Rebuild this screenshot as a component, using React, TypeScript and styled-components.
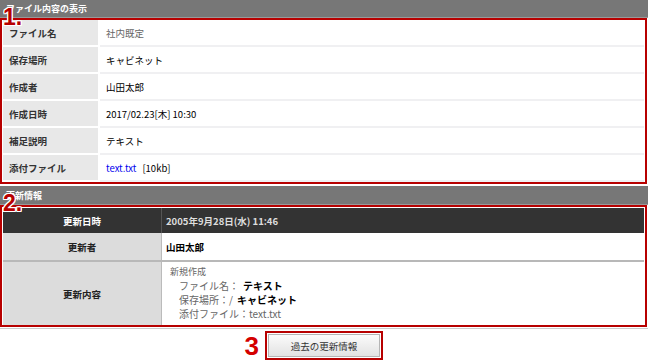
import React from "react";
import styled, { createGlobalStyle } from "styled-components";

const Global = createGlobalStyle`
  html, body { margin: 0; padding: 0; background: #fff; }
  body { font-family: "Noto Sans CJK JP", "Liberation Sans", sans-serif; width: 648px; height: 360px; overflow: hidden; }
`;

const RED = "#b70000";

const Page = styled.div`
  width: 648px;
  display: flex;
  flex-direction: column;
`;

const Section = styled.section`
  position: relative;
  display: flex;
  flex-direction: column;
`;

const SectionHeader = styled.div<{ $h: number }>`
  height: ${(p) => p.$h}px;
  line-height: ${(p) => p.$h}px;
  background: #777;
  color: #fff;
  font-size: 9px;
  font-weight: bold;
  padding-left: 6px;
  border-bottom: 1px solid #999;
  box-sizing: border-box;
`;

const Marker = styled.div<{ $top: number }>`
  position: absolute;
  left: 3px;
  top: ${(p) => p.$top}px;
  font-family: "Liberation Sans", Arial, sans-serif;
  font-weight: bold;
  font-size: 23px;
  line-height: 23px;
  color: ${RED};
  text-shadow: 1px 1px 0 #fff, -1px -1px 0 #fff, 1px -1px 0 #fff, -1px 1px 0 #fff,
    0 1px 0 #fff, 1px 0 0 #fff, 0 -1px 0 #fff, -1px 0 0 #fff;
`;

const RedBox = styled.div`
  border: 2px solid ${RED};
  margin-right: 1px;
  background: #fff;
`;

const InfoGrid = styled.div`
  display: grid;
  grid-template-columns: 95px 1fr;
  column-gap: 2px;
  padding: 0 1px;
`;

const InfoLabel = styled.div`
  height: 25px;
  margin-bottom: 2px;
  background: #e8e8e8;
  display: flex;
  align-items: center;
  padding-left: 6px;
  font-size: 9.5px;
  font-weight: bold;
  color: #333;
`;

const InfoValue = styled.div<{ $muted?: boolean }>`
  height: 25px;
  border-bottom: 2px solid #f0f0f2;
  display: flex;
  align-items: center;
  padding-left: 6px;
  font-size: 9.5px;
  color: ${(p) => (p.$muted ? "#666" : "#000")};
  gap: 6px;
`;

const FileLink = styled.span`
  color: #0000ee;
`;

const HistGrid = styled.div`
  display: grid;
  grid-template-columns: 159px 1fr;
  padding: 1px 1px 0 1px;
`;

const HistLabel = styled.div<{ $dark?: boolean; $h: number; $line?: boolean }>`
  height: ${(p) => p.$h}px;
  background: ${(p) => (p.$dark ? "#333" : "#dcdcdc")};
  color: ${(p) => (p.$dark ? "#fff" : "#222")};
  border-right: 1px solid ${(p) => (p.$dark ? "#555" : "#bbb")};
  border-bottom: ${(p) => (p.$line ? "2px solid #b8b8b8" : "none")};
  display: flex;
  align-items: center;
  justify-content: center;
  font-size: 9.5px;
  font-weight: bold;
`;

const HistValue = styled.div<{ $dark?: boolean; $h: number; $line?: boolean }>`
  height: ${(p) => p.$h}px;
  background: ${(p) => (p.$dark ? "#333" : "#fff")};
  color: ${(p) => (p.$dark ? "#ddd" : "#000")};
  border-bottom: ${(p) => (p.$line ? "2px solid #b8b8b8" : "none")};
  display: flex;
  align-items: center;
  padding-left: 4px;
  font-size: 9.5px;
  font-weight: ${(p) => (p.$dark ? "bold" : "bold")};
`;

const ChangeList = styled.div`
  display: flex;
  flex-direction: column;
  padding: 3px 0 0 4px;
  font-size: 9px;
  line-height: 14px;
  color: #666;
  font-weight: normal;
`;

const ChangeItem = styled.div`
  padding-left: 9px;
  font-size: 10px;
  color: #666;
`;

const Strong = styled.span`
  color: #000;
  font-weight: bold;
  margin-left: 4px;
`;

const Bottom = styled.div`
  margin-top: 1px;
  border-top: 1px solid #ccc;
  padding-top: 2px;
  display: grid;
  grid-template-columns: 1fr auto 1fr;
  align-items: center;
  column-gap: 6px;
  border-bottom: 2px solid #d4d4d4;
  padding-bottom: 0;
`;

const StepNum = styled.div`
  justify-self: end;
  font-family: "Liberation Sans", Arial, sans-serif;
  font-weight: bold;
  font-size: 26px;
  line-height: 26px;
  color: #d40000;
`;

const ButtonFrame = styled.div`
  border: 2px solid ${RED};
  padding: 1px;
`;

const Button = styled.button`
  width: 112px;
  height: 23px;
  border: 1px solid #b5b5b5;
  background: linear-gradient(#fbfbfb, #e2e2e2);
  font-family: "Noto Sans CJK JP", sans-serif;
  font-size: 9.5px;
  color: #333;
  padding: 0;
  display: block;
`;

export default function App() {
  return (
    <Page>
      <Global />
      <Section>
        <SectionHeader $h={18}>ファイル内容の表示</SectionHeader>
        <RedBox>
          <InfoGrid>
            <InfoLabel>ファイル名</InfoLabel>
            <InfoValue $muted>社内既定</InfoValue>
            <InfoLabel>保存場所</InfoLabel>
            <InfoValue>キャビネット</InfoValue>
            <InfoLabel>作成者</InfoLabel>
            <InfoValue>山田太郎</InfoValue>
            <InfoLabel>作成日時</InfoLabel>
            <InfoValue>2017/02.23[木] 10:30</InfoValue>
            <InfoLabel>補足説明</InfoLabel>
            <InfoValue>テキスト</InfoValue>
            <InfoLabel>添付ファイル</InfoLabel>
            <InfoValue>
              <FileLink>text.txt</FileLink>
              <span>[10kb]</span>
            </InfoValue>
          </InfoGrid>
        </RedBox>
        <Marker $top={6}>1.</Marker>
      </Section>
      <Section style={{ marginTop: 2 }}>
        <SectionHeader $h={19}>更新情報</SectionHeader>
        <RedBox>
          <HistGrid>
            <HistLabel $dark $h={25}>更新日時</HistLabel>
            <HistValue $dark $h={25}>2005年9月28日(水) 11:46</HistValue>
            <HistLabel $h={27} $line>更新者</HistLabel>
            <HistValue $h={27} $line>山田太郎</HistValue>
            <HistLabel $h={63}>更新内容</HistLabel>
            <HistValue $h={63} style={{ alignItems: "flex-start" }}>
              <ChangeList>
                <div>新規作成</div>
                <ChangeItem>
                  ファイル名：<Strong>テキスト</Strong>
                </ChangeItem>
                <ChangeItem>
                  保存場所：/<Strong>キャビネット</Strong>
                </ChangeItem>
                <ChangeItem>添付ファイル：text.txt</ChangeItem>
              </ChangeList>
            </HistValue>
          </HistGrid>
        </RedBox>
        <Marker $top={6}>2.</Marker>
      </Section>
      <Bottom>
        <StepNum>3</StepNum>
        <ButtonFrame>
          <Button>過去の更新情報</Button>
        </ButtonFrame>
        <span />
      </Bottom>
    </Page>
  );
}
